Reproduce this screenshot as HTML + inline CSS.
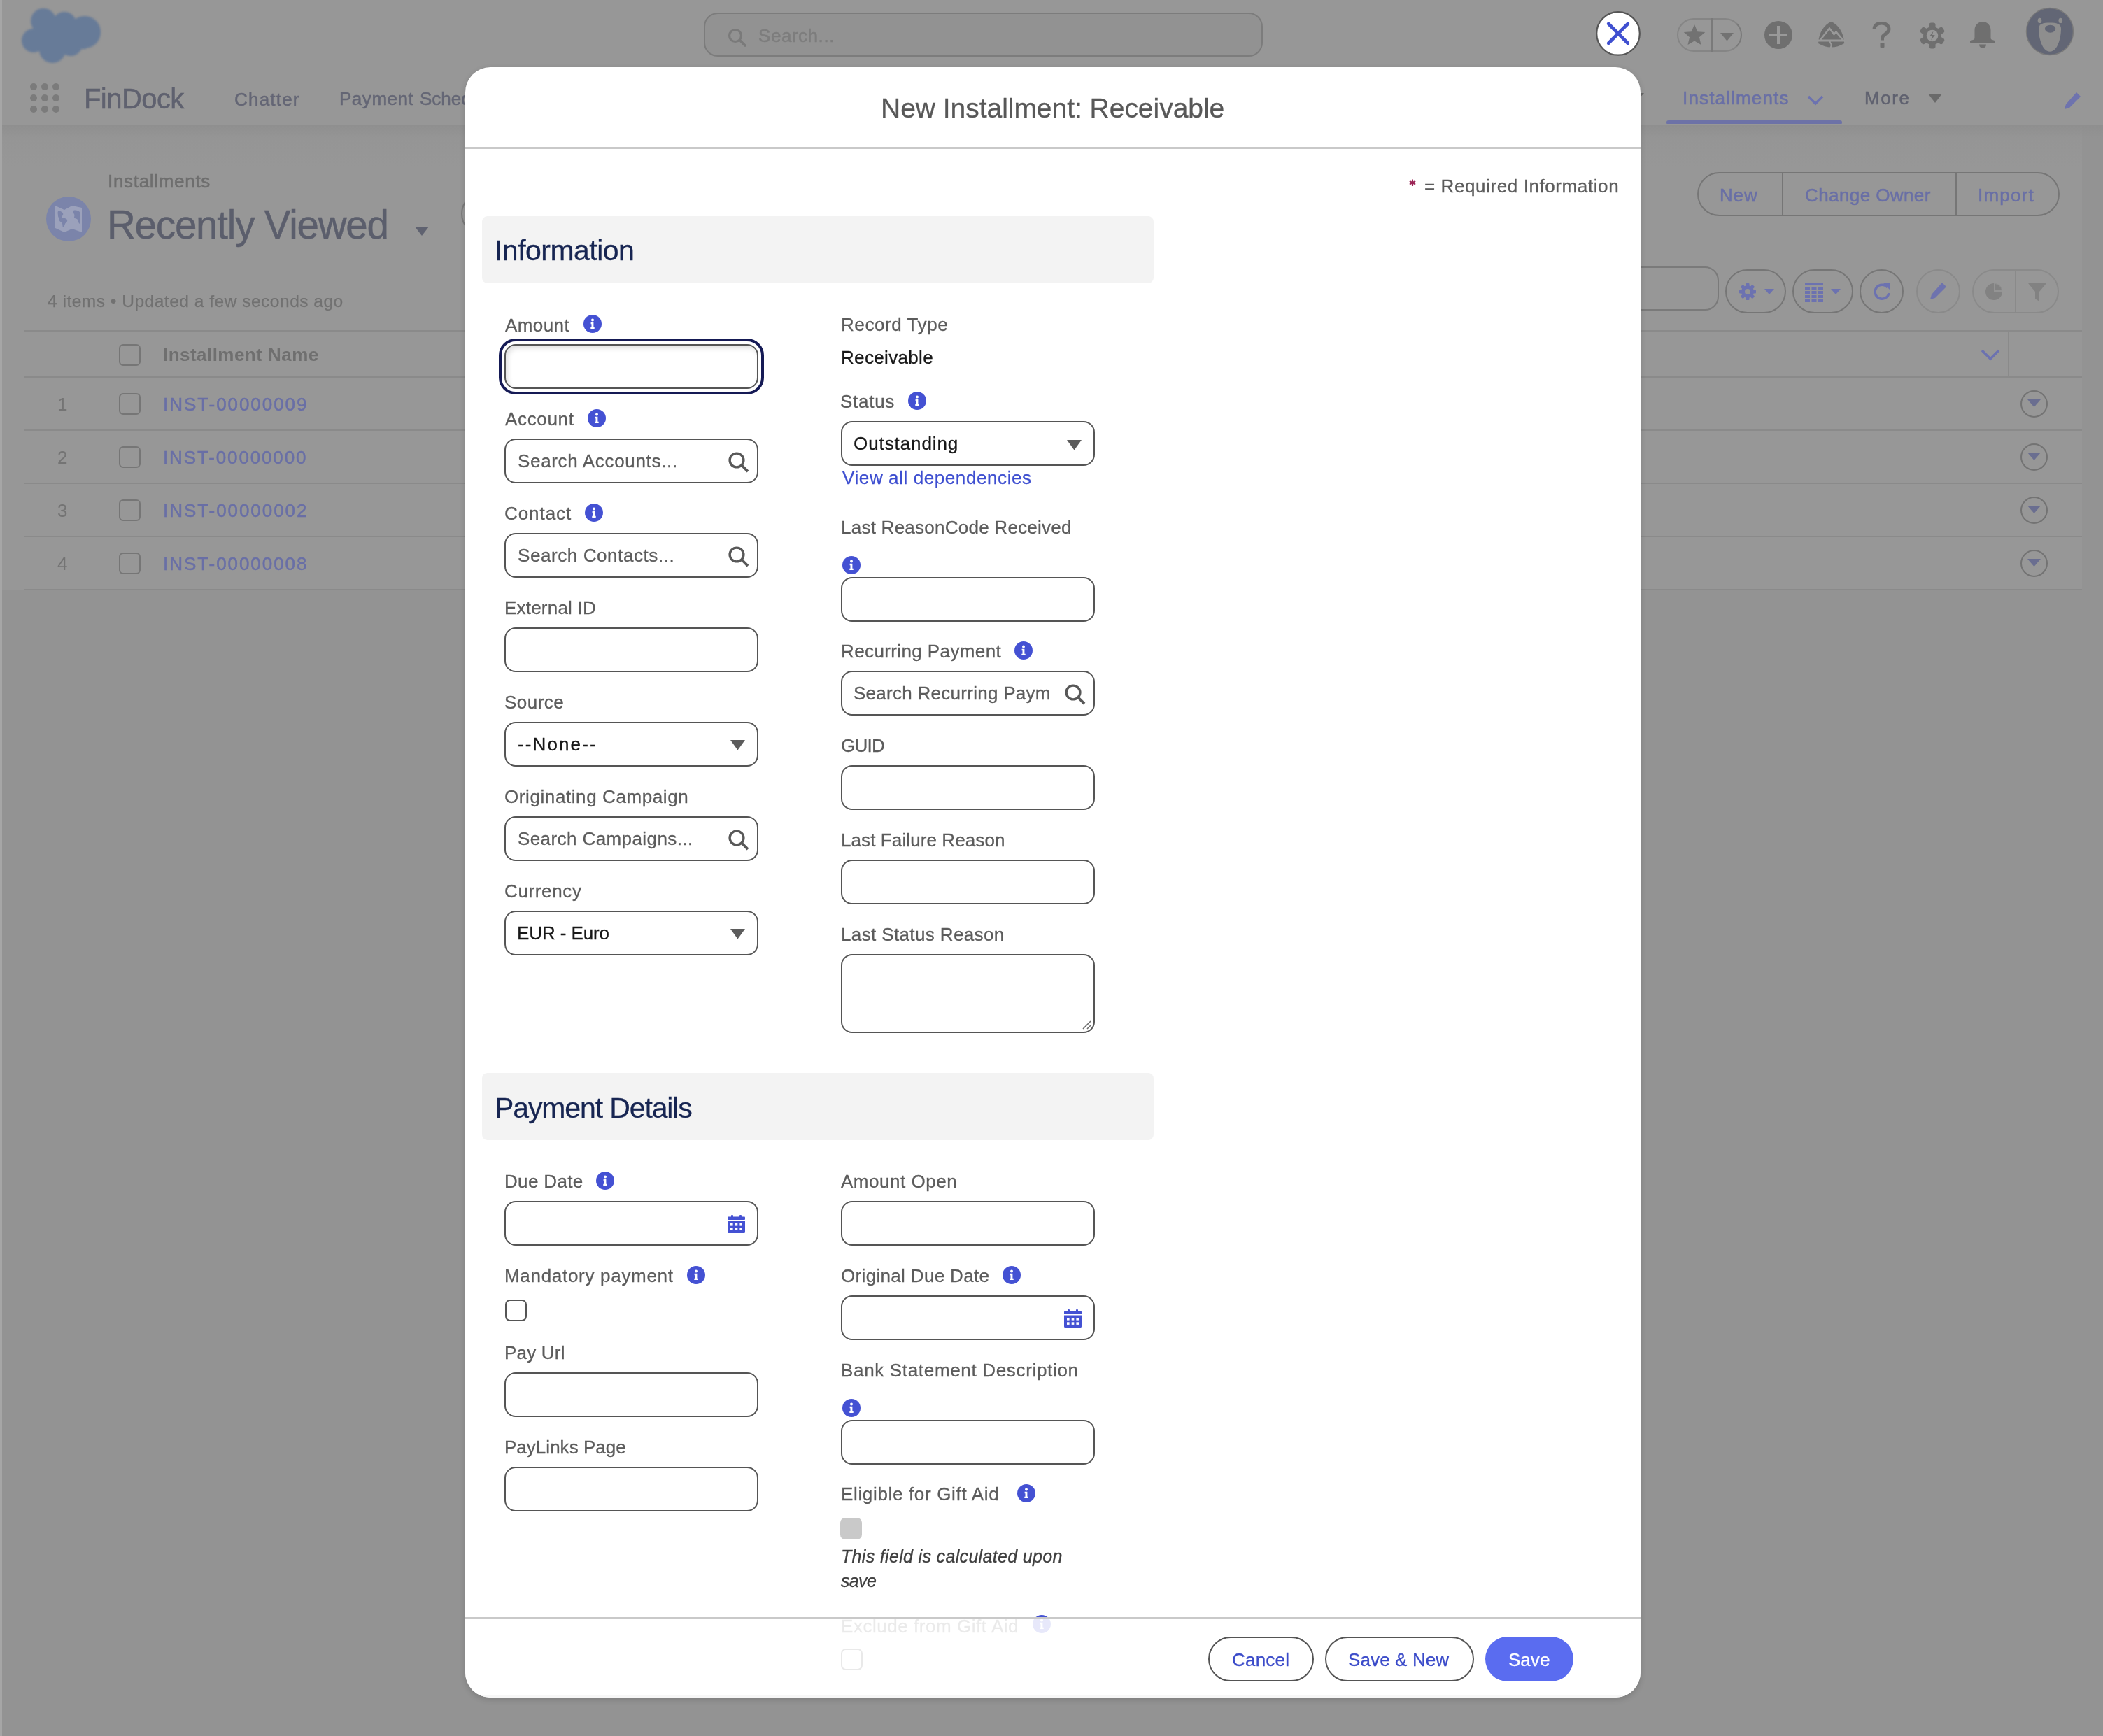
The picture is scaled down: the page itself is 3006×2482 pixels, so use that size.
<!DOCTYPE html>
<html><head><meta charset="utf-8"><style>
html,body{margin:0;padding:0;width:3006px;height:2482px;overflow:hidden;background:#939393;}
.r{position:absolute;}
.t{position:absolute;white-space:pre;font-family:"Liberation Sans",sans-serif;will-change:transform;-webkit-text-stroke:0.3px currentColor;}
#bg .t{-webkit-text-stroke:0.5px currentColor;}
#bg{position:absolute;left:0;top:0;width:3006px;height:2482px;filter:blur(0.7px);}
#md{position:absolute;left:0;top:0;width:3006px;height:2482px;clip-path:inset(96px 661px 55px 665px round 36px);}
</style></head><body>
<div id="bg"><div class="r" style="left:0px;top:0px;width:3006px;height:179px;background:#979797"></div><div class="r" style="left:3px;top:179px;width:2973px;height:665px;background:linear-gradient(#8f8f8f,#959595 18px,#979797 60px)"></div><div class="r" style="left:0px;top:0px;width:3px;height:2482px;background:#a6a6a6"></div><svg class="r" style="left:28px;top:8px;filter:blur(1.5px)" width="122" height="86" viewBox="0 0 122 86">
<g fill="#677b98"><circle cx="34" cy="22" r="18"/><circle cx="64" cy="26" r="17"/><circle cx="93" cy="38" r="23"/>
<circle cx="20" cy="50" r="17"/><circle cx="47" cy="63" r="19"/><circle cx="73" cy="55" r="17"/><rect x="20" y="24" width="75" height="38"/></g></svg><div class="r" style="left:1006px;top:18px;width:799px;height:63px;border:2px solid #7c7c7c;border-radius:20px;box-sizing:border-box;background:#929292"></div><svg class="r" style="left:1040px;top:40px" width="27" height="27" viewBox="0 0 27 27"><circle cx="11" cy="11" r="8.5" fill="none" stroke="#7a7a7a" stroke-width="3.2"/><line x1="17.5" y1="17.5" x2="25" y2="25" stroke="#7a7a7a" stroke-width="3.6" stroke-linecap="round"/></svg><div class="t" style="left:1084.1px;top:37.9px;font-size:26px;line-height:26px;color:#7d7d7d;font-weight:400;font-style:normal;letter-spacing:0.54px;">Search...</div><div class="r" style="left:2397px;top:26px;width:93px;height:48px;border:2px solid #858585;border-right-color:#7a7a7a;border-radius:24px;box-sizing:border-box"></div><div class="r" style="left:2445px;top:26px;width:3px;height:48px;background:#7a7a7a"></div><svg class="r" style="left:2406px;top:34px" width="32" height="31" viewBox="0 0 32 31"><path fill="#727272" d="M16 1l4.3 10.2 11 .9-8.4 7.2 2.6 10.8L16 24.4l-9.5 5.7 2.6-10.8L.7 12.1l11-.9z"/></svg><svg class="r" style="left:2459px;top:47px" width="19" height="12" viewBox="0 0 19 12"><path fill="#727272" d="M0 0h19L9.5 11.5z"/></svg><svg class="r" style="left:2522px;top:30px" width="40" height="40" viewBox="0 0 40 40"><circle cx="20" cy="20" r="20" fill="#6f6f6f"/><rect x="18" y="7" width="4" height="26" fill="#999"/><rect x="7" y="18" width="26" height="4" fill="#999"/></svg><svg class="r" style="left:2599px;top:31px" width="38" height="38" viewBox="0 0 38 38"><path fill="#6f6f6f" d="M18.6 0C28 4 36.5 15 37.2 31Q18.6 42 0 31C.7 15 9 4 18.6 0z"/>
<path d="M3 26L16 9.5l6.5 8.5 3-3.5L35 26" fill="none" stroke="#999" stroke-width="2.6"/><rect x="0" y="25.5" width="38" height="3" fill="#999"/><path d="M17 28c-1 3 3 4 1.5 6.5L17.5 38" fill="none" stroke="#999" stroke-width="2"/></svg><svg class="r" style="left:2676px;top:31px" width="28" height="38" viewBox="0 0 28 38"><path d="M3 11C3 5 8 2 13.5 2S24 5.5 24 10.5c0 6-7.5 7-9.5 12v4" fill="none" stroke="#6f6f6f" stroke-width="5"/><rect x="11.5" y="30.5" width="6" height="6.5" rx="1" fill="#6f6f6f"/></svg><svg class="r" style="left:2744px;top:32px" width="36" height="38" viewBox="0 0 36 38"><g fill="#6f6f6f"><circle cx="18" cy="19" r="13"/>
<rect x="13.5" y="0.5" width="9" height="37" rx="3"/><rect x="13.5" y="0.5" width="9" height="37" rx="3" transform="rotate(60 18 19)"/><rect x="13.5" y="0.5" width="9" height="37" rx="3" transform="rotate(120 18 19)"/></g>
<circle cx="18" cy="19" r="8.3" fill="#999"/><path fill="#6f6f6f" d="M19.5 12.5l-5.5 7.5h3.8l-1.5 5.5 5.5-7.5h-3.8z"/></svg><svg class="r" style="left:2815px;top:31px" width="38" height="38" viewBox="0 0 38 38"><path fill="#6f6f6f" d="M19 0c-6.5 0-11.5 5-11.5 12v11.5C7.5 25 6 26 3.5 26.5 1 27 1 28 1 29s.5 1.5 2 1.5h32c1.5 0 2-.5 2-1.5s0-2-2.5-2.5C32 26 30.5 25 30.5 23.5V12C30.5 5 25.5 0 19 0z"/><path fill="#6f6f6f" d="M14 32.5h10c0 3-2 5-5 5s-5-2-5-5z"/></svg><svg class="r" style="left:2895px;top:10px" width="70" height="70" viewBox="0 0 70 70"><circle cx="35" cy="35" r="33.5" fill="#626675" stroke="#7a7a7a" stroke-width="1.5"/>
<ellipse cx="20.5" cy="19.4" rx="2.8" ry="3.6" fill="#8e8e8e"/><ellipse cx="50.3" cy="19.4" rx="2.8" ry="3.6" fill="#8e8e8e"/>
<path fill="#8e8e8e" d="M35 22.5c-9.5 0-16 1.5-16 8.5 0 12 4.5 32.7 16 32.7S51 43 51 31c0-7-6.5-8.5-16-8.5z"/><ellipse cx="35.6" cy="31.2" rx="7.7" ry="5.5" fill="#626675"/></svg><div class="r" style="left:43px;top:119px;width:10px;height:10px;border-radius:50%;background:#7b7b7b"></div><div class="r" style="left:43px;top:135px;width:10px;height:10px;border-radius:50%;background:#7b7b7b"></div><div class="r" style="left:43px;top:151px;width:10px;height:10px;border-radius:50%;background:#7b7b7b"></div><div class="r" style="left:59px;top:119px;width:10px;height:10px;border-radius:50%;background:#7b7b7b"></div><div class="r" style="left:59px;top:135px;width:10px;height:10px;border-radius:50%;background:#7b7b7b"></div><div class="r" style="left:59px;top:151px;width:10px;height:10px;border-radius:50%;background:#7b7b7b"></div><div class="r" style="left:75px;top:119px;width:10px;height:10px;border-radius:50%;background:#7b7b7b"></div><div class="r" style="left:75px;top:135px;width:10px;height:10px;border-radius:50%;background:#7b7b7b"></div><div class="r" style="left:75px;top:151px;width:10px;height:10px;border-radius:50%;background:#7b7b7b"></div><div class="t" style="left:119.7px;top:120.5px;font-size:40px;line-height:40px;color:#5f616f;font-weight:400;font-style:normal;letter-spacing:-0.56px;">FinDock</div><div class="t" style="left:335.1px;top:128.9px;font-size:26px;line-height:26px;color:#646675;font-weight:400;font-style:normal;letter-spacing:1.21px;">Chatter</div><div class="t" style="left:485.1px;top:127.6px;font-size:26px;line-height:26px;color:#646675;font-weight:400;font-style:normal;letter-spacing:0.53px;">Payment</div><div class="t" style="left:599.5px;top:127.8px;font-size:26px;line-height:26px;color:#646675;font-weight:400;font-style:normal;letter-spacing:normal;">Schedules</div><svg class="r" style="left:2334px;top:133px" width="16" height="10" viewBox="0 0 16 10"><path fill="#666" d="M0 0h16L8 9z"/></svg><div class="t" style="left:2405.0px;top:127.4px;font-size:26px;line-height:26px;color:#696fa6;font-weight:400;font-style:normal;letter-spacing:1.16px;">Installments</div><svg class="r" style="left:2582px;top:135px" width="26" height="16" viewBox="0 0 26 16"><path d="M3 3l10 10L23 3" fill="none" stroke="#6c72b0" stroke-width="3.5"/></svg><div class="r" style="left:2382px;top:172px;width:251px;height:6px;border-radius:3px;background:#6d72a7"></div><div class="t" style="left:2664.6px;top:127.4px;font-size:26px;line-height:26px;color:#5f616f;font-weight:400;font-style:normal;letter-spacing:1.60px;">More</div><svg class="r" style="left:2756px;top:134px" width="20" height="14" viewBox="0 0 20 14"><path fill="#6a6a6a" d="M0 0h20L10 13z"/></svg><svg class="r" style="left:2948px;top:130px" width="28" height="28" viewBox="0 0 28 28"><path fill="#6e73ae" d="M20 2l6 6L10 24l-7 2 2-7z"/></svg><svg class="r" style="left:66px;top:281px" width="64" height="64" viewBox="0 0 64 64"><circle cx="32" cy="32" r="32" fill="#7b84aa"/>
<path fill="#9ba1bb" d="M13 13L26 19L37 13L51 16L51 51L37 46L26 51L13 45z"/><path fill="#7b84aa" d="M17 21c3-1 6 1 7 3 1 3-2 3-1 6 2 0 5 1 7 3 1 3-2 4-3 6-1 2-1 4-3 5-1-2 0-5-2-7-2-1-4-3-3-5 0-2-2-2-2-4 0-3-1-5 0-7zM39 20c3-1 7 0 9 2v17c-2-1-2-4-3-6-1-2-4-1-5-3 0-2 1-3 0-5-1-1-2-3-1-5z"/></svg><div class="t" style="left:153.6px;top:246.2px;font-size:26px;line-height:26px;color:#6e6e6e;font-weight:400;font-style:normal;letter-spacing:0.69px;">Installments</div><div class="t" style="left:152.7px;top:293.9px;font-size:56.5px;line-height:56.5px;color:#5b5e6c;font-weight:400;font-style:normal;letter-spacing:-1.20px;">Recently Viewed</div><svg class="r" style="left:593px;top:324px" width="20" height="14" viewBox="0 0 20 14"><path fill="#5f6270" d="M0 0h20L10 13z"/></svg><div class="r" style="left:659px;top:274px;width:63px;height:63px;border:2px solid #7a7a7a;border-radius:50%;box-sizing:border-box"></div><div class="t" style="left:67.5px;top:419.0px;font-size:24.5px;line-height:24.5px;color:#717171;font-weight:400;font-style:normal;letter-spacing:0.51px;-webkit-text-stroke:0.25px currentColor">4 items • Updated a few seconds ago</div><div class="r" style="left:2426px;top:246px;width:518px;height:63px;border:2px solid #767676;border-radius:32px;box-sizing:border-box"></div><div class="r" style="left:2547px;top:247px;width:2px;height:61px;background:#767676"></div><div class="r" style="left:2795px;top:247px;width:2px;height:61px;background:#767676"></div><div class="t" style="left:2458.4px;top:265.7px;font-size:26px;line-height:26px;color:#696fa6;font-weight:400;font-style:normal;letter-spacing:0.82px;">New</div><div class="t" style="left:2580.1px;top:265.7px;font-size:26px;line-height:26px;color:#696fa6;font-weight:400;font-style:normal;letter-spacing:0.41px;">Change Owner</div><div class="t" style="left:2827.2px;top:265.7px;font-size:26px;line-height:26px;color:#696fa6;font-weight:400;font-style:normal;letter-spacing:1.19px;">Import</div><div class="r" style="left:1900px;top:381px;width:557px;height:63px;border:2px solid #7a7a7a;border-radius:20px;box-sizing:border-box"></div><div class="r" style="left:2466px;top:385px;width:87px;height:63px;border:2px solid #767676;border-radius:32px;box-sizing:border-box"></div><svg class="r" style="left:2484px;top:403px" width="28" height="28" viewBox="0 0 28 28"><g fill="#6c72b0"><circle cx="14" cy="14" r="9"/><rect x="11.5" y="2" width="5" height="24" rx="1"/><rect x="11.5" y="2" width="5" height="24" rx="1" transform="rotate(45 14 14)"/><rect x="11.5" y="2" width="5" height="24" rx="1" transform="rotate(90 14 14)"/><rect x="11.5" y="2" width="5" height="24" rx="1" transform="rotate(135 14 14)"/></g><circle cx="14" cy="14" r="4" fill="#949494"/></svg><svg class="r" style="left:2522px;top:413px" width="14" height="9" viewBox="0 0 14 9"><path fill="#6c72b0" d="M0 0h14L7 8z"/></svg><div class="r" style="left:2562px;top:385px;width:87px;height:63px;border:2px solid #767676;border-radius:32px;box-sizing:border-box"></div><svg class="r" style="left:2580px;top:404px" width="26" height="28" viewBox="0 0 26 28"><g fill="#6c72b0"><rect x="0" y="0" width="26" height="4"/><rect x="0" y="6" width="7" height="4"/><rect x="9.5" y="6" width="7" height="4"/><rect x="19" y="6" width="7" height="4"/><rect x="0" y="12" width="7" height="4"/><rect x="9.5" y="12" width="7" height="4"/><rect x="19" y="12" width="7" height="4"/><rect x="0" y="18" width="7" height="4"/><rect x="9.5" y="18" width="7" height="4"/><rect x="19" y="18" width="7" height="4"/><rect x="0" y="24" width="7" height="4"/><rect x="9.5" y="24" width="7" height="4"/><rect x="19" y="24" width="7" height="4"/></g></svg><svg class="r" style="left:2617px;top:413px" width="14" height="9" viewBox="0 0 14 9"><path fill="#6c72b0" d="M0 0h14L7 8z"/></svg><div class="r" style="left:2658px;top:385px;width:63px;height:63px;border:2px solid #767676;border-radius:50%;box-sizing:border-box"></div><svg class="r" style="left:2675px;top:402px" width="30" height="30" viewBox="0 0 30 30"><path d="M23 9A10 10 0 1 0 25 17" fill="none" stroke="#6c72b0" stroke-width="3.5"/><path fill="#6c72b0" d="M17 3h10v10z"/></svg><div class="r" style="left:2739px;top:385px;width:63px;height:63px;border:2px solid #8a8a8a;border-radius:50%;box-sizing:border-box"></div><svg class="r" style="left:2756px;top:402px" width="28" height="28" viewBox="0 0 28 28"><path fill="#6e73ae" d="M20 2l6 6L10 24l-7 2 2-7z"/></svg><div class="r" style="left:2819px;top:385px;width:124px;height:63px;border:2px solid #8a8a8a;border-radius:32px;box-sizing:border-box"></div><div class="r" style="left:2880px;top:386px;width:2px;height:61px;background:#8a8a8a"></div><svg class="r" style="left:2836px;top:403px" width="28" height="28" viewBox="0 0 28 28"><circle cx="14" cy="14" r="12" fill="#828282"/><path d="M14 14V2A12 12 0 0 1 26 14z" fill="#949494"/><path d="M16 12V3a10 10 0 0 1 9 9z" fill="#828282"/></svg><svg class="r" style="left:2898px;top:404px" width="28" height="28" viewBox="0 0 28 28"><path fill="#828282" d="M1 1h26L17 13v14l-6-4V13z"/></svg><div class="r" style="left:34px;top:472px;width:2942px;height:2px;background:#8a8a8a"></div><div class="r" style="left:34px;top:538px;width:2942px;height:2px;background:#8a8a8a"></div><div class="r" style="left:34px;top:614px;width:2942px;height:2px;background:#8a8a8a"></div><div class="r" style="left:34px;top:690px;width:2942px;height:2px;background:#8a8a8a"></div><div class="r" style="left:34px;top:766px;width:2942px;height:2px;background:#8a8a8a"></div><div class="r" style="left:34px;top:842px;width:2942px;height:2px;background:#8a8a8a"></div><div class="r" style="left:2870px;top:473px;width:2px;height:66px;background:#8a8a8a"></div><svg class="r" style="left:2830px;top:498px" width="30" height="20" viewBox="0 0 30 20"><path d="M3 3l12 12L27 3" fill="none" stroke="#6c72b0" stroke-width="3.5"/></svg><div class="r" style="left:170px;top:492px;width:31px;height:31px;border:2px solid #767676;border-radius:6px;box-sizing:border-box"></div><div class="t" style="left:233.0px;top:493.5px;font-size:26px;line-height:26px;color:#6f6f6f;font-weight:700;font-style:normal;letter-spacing:0.46px;-webkit-text-stroke:0px">Installment Name</div><div class="t" style="left:82.0px;top:565.3px;font-size:26px;line-height:26px;color:#747474;font-weight:400;font-style:normal;letter-spacing:normal;-webkit-text-stroke:0px">1</div><div class="r" style="left:170px;top:562px;width:31px;height:31px;border:2px solid #767676;border-radius:6px;box-sizing:border-box"></div><div class="t" style="left:232.5px;top:565.4px;font-size:26px;line-height:26px;color:#696fa6;font-weight:400;font-style:normal;letter-spacing:1.94px;">INST-00000009</div><div class="r" style="left:2888px;top:558px;width:39px;height:39px;border:2px solid #737373;border-radius:50%;box-sizing:border-box"></div><svg class="r" style="left:2898px;top:571px" width="19" height="12" viewBox="0 0 19 12"><path fill="#6a6e90" d="M0 0h19L9.5 11z"/></svg><div class="t" style="left:82.0px;top:641.3px;font-size:26px;line-height:26px;color:#747474;font-weight:400;font-style:normal;letter-spacing:normal;-webkit-text-stroke:0px">2</div><div class="r" style="left:170px;top:638px;width:31px;height:31px;border:2px solid #767676;border-radius:6px;box-sizing:border-box"></div><div class="t" style="left:232.5px;top:641.4px;font-size:26px;line-height:26px;color:#696fa6;font-weight:400;font-style:normal;letter-spacing:1.86px;">INST-00000000</div><div class="r" style="left:2888px;top:634px;width:39px;height:39px;border:2px solid #737373;border-radius:50%;box-sizing:border-box"></div><svg class="r" style="left:2898px;top:647px" width="19" height="12" viewBox="0 0 19 12"><path fill="#6a6e90" d="M0 0h19L9.5 11z"/></svg><div class="t" style="left:82.0px;top:717.3px;font-size:26px;line-height:26px;color:#747474;font-weight:400;font-style:normal;letter-spacing:normal;-webkit-text-stroke:0px">3</div><div class="r" style="left:170px;top:714px;width:31px;height:31px;border:2px solid #767676;border-radius:6px;box-sizing:border-box"></div><div class="t" style="left:232.5px;top:717.4px;font-size:26px;line-height:26px;color:#696fa6;font-weight:400;font-style:normal;letter-spacing:1.94px;">INST-00000002</div><div class="r" style="left:2888px;top:710px;width:39px;height:39px;border:2px solid #737373;border-radius:50%;box-sizing:border-box"></div><svg class="r" style="left:2898px;top:723px" width="19" height="12" viewBox="0 0 19 12"><path fill="#6a6e90" d="M0 0h19L9.5 11z"/></svg><div class="t" style="left:82.0px;top:793.3px;font-size:26px;line-height:26px;color:#747474;font-weight:400;font-style:normal;letter-spacing:normal;-webkit-text-stroke:0px">4</div><div class="r" style="left:170px;top:790px;width:31px;height:31px;border:2px solid #767676;border-radius:6px;box-sizing:border-box"></div><div class="t" style="left:232.5px;top:793.4px;font-size:26px;line-height:26px;color:#696fa6;font-weight:400;font-style:normal;letter-spacing:1.94px;">INST-00000008</div><div class="r" style="left:2888px;top:786px;width:39px;height:39px;border:2px solid #737373;border-radius:50%;box-sizing:border-box"></div><svg class="r" style="left:2898px;top:799px" width="19" height="12" viewBox="0 0 19 12"><path fill="#6a6e90" d="M0 0h19L9.5 11z"/></svg><div class="r" style="left:2976px;top:179px;width:30px;height:18px;background:linear-gradient(#8f8f8f,#939393)"></div></div>
<div class="r" style="left:665px;top:96px;width:1680px;height:2331px;border-radius:36px;box-shadow:0 3px 8px rgba(0,0,0,0.16)"></div><div id="md"><div class="r" style="left:665px;top:96px;width:1680px;height:2331px;background:#fff"></div><div class="t" style="left:1259.2px;top:135.4px;font-size:39px;line-height:39px;color:#585858;font-weight:400;font-style:normal;letter-spacing:-0.03px;">New Installment: Receivable</div><div class="r" style="left:665px;top:210px;width:1680px;height:3px;background:#c9c9c9"></div><svg class="r" style="left:2009px;top:251px" width="20" height="20" viewBox="0 0 20 20"><g stroke="#9b2355" stroke-width="2.1"><path d="M10 5.5v9.5"/><path d="M5.9 7.9l8.2 4.7M14.1 7.9l-8.2 4.7"/></g></svg><div class="t" style="left:2035.9px;top:253.2px;font-size:26px;line-height:26px;color:#5c5c5c;font-weight:400;font-style:normal;letter-spacing:0.59px;">= Required Information</div><div class="r" style="left:689px;top:309px;width:960px;height:96px;background:#f3f3f3;border-radius:8px"></div><div class="t" style="left:707.1px;top:338.0px;font-size:41px;line-height:41px;color:#172552;font-weight:400;font-style:normal;letter-spacing:-0.52px;">Information</div><div class="r" style="left:689px;top:1534px;width:960px;height:96px;background:#f3f3f3;border-radius:8px"></div><div class="t" style="left:706.5px;top:1563.6px;font-size:41px;line-height:41px;color:#172552;font-weight:400;font-style:normal;letter-spacing:-1.12px;">Payment Details</div><div class="t" style="left:722.4px;top:452.0px;font-size:26px;line-height:26px;color:#5c5c5c;font-weight:400;font-style:normal;letter-spacing:0.41px;">Amount</div><svg class="r" style="left:834.0px;top:450.0px" width="26" height="26" viewBox="0 0 26 26"><circle cx="13" cy="13" r="13" fill="#4451d3"/><circle cx="13" cy="7.6" r="2" fill="#fff"/><path fill="#fff" d="M10.6 10.8h3.8v6.9h1.3v2.4h-5.4v-2.4h1.2v-4.5h-0.9z"/></svg><div class="r" style="left:713px;top:484px;width:379px;height:80px;border:4px solid #151a55;border-radius:24px;box-sizing:border-box"></div><div class="r" style="left:721px;top:492px;width:363px;height:64px;border:2px solid #555555;border-radius:16px;box-sizing:border-box;background:#fff;box-shadow:inset 3px 4px 7px rgba(0,0,0,0.12)"></div><div class="t" style="left:721.9px;top:586.4px;font-size:26px;line-height:26px;color:#5c5c5c;font-weight:400;font-style:normal;letter-spacing:0.66px;">Account</div><svg class="r" style="left:840.0px;top:585.0px" width="26" height="26" viewBox="0 0 26 26"><circle cx="13" cy="13" r="13" fill="#4451d3"/><circle cx="13" cy="7.6" r="2" fill="#fff"/><path fill="#fff" d="M10.6 10.8h3.8v6.9h1.3v2.4h-5.4v-2.4h1.2v-4.5h-0.9z"/></svg><div class="r" style="left:721px;top:627px;width:363px;height:64px;border:2px solid #555555;border-radius:16px;box-sizing:border-box;background:#fff;"></div><div class="t" style="left:739.5px;top:646.4px;font-size:26px;line-height:26px;color:#5c5c5c;font-weight:400;font-style:normal;letter-spacing:0.67px;">Search Accounts...</div><svg class="r" style="left:1041px;top:646px" width="30" height="30" viewBox="0 0 30 30"><circle cx="12" cy="12" r="9.9" fill="none" stroke="#585858" stroke-width="3.4"/><line x1="19" y1="19" x2="28" y2="28.2" stroke="#585858" stroke-width="3.8"/></svg><div class="t" style="left:720.6px;top:721.4px;font-size:26px;line-height:26px;color:#5c5c5c;font-weight:400;font-style:normal;letter-spacing:0.93px;">Contact</div><svg class="r" style="left:836.0px;top:720.0px" width="26" height="26" viewBox="0 0 26 26"><circle cx="13" cy="13" r="13" fill="#4451d3"/><circle cx="13" cy="7.6" r="2" fill="#fff"/><path fill="#fff" d="M10.6 10.8h3.8v6.9h1.3v2.4h-5.4v-2.4h1.2v-4.5h-0.9z"/></svg><div class="r" style="left:721px;top:762px;width:363px;height:64px;border:2px solid #555555;border-radius:16px;box-sizing:border-box;background:#fff;"></div><div class="t" style="left:739.5px;top:781.4px;font-size:26px;line-height:26px;color:#5c5c5c;font-weight:400;font-style:normal;letter-spacing:0.58px;">Search Contacts...</div><svg class="r" style="left:1041px;top:781px" width="30" height="30" viewBox="0 0 30 30"><circle cx="12" cy="12" r="9.9" fill="none" stroke="#585858" stroke-width="3.4"/><line x1="19" y1="19" x2="28" y2="28.2" stroke="#585858" stroke-width="3.8"/></svg><div class="t" style="left:721.3px;top:856.4px;font-size:26px;line-height:26px;color:#5c5c5c;font-weight:400;font-style:normal;letter-spacing:0.21px;">External ID</div><div class="r" style="left:721px;top:897px;width:363px;height:64px;border:2px solid #555555;border-radius:16px;box-sizing:border-box;background:#fff;"></div><div class="t" style="left:720.6px;top:991.4px;font-size:26px;line-height:26px;color:#5c5c5c;font-weight:400;font-style:normal;letter-spacing:0.47px;">Source</div><div class="r" style="left:721px;top:1032px;width:363px;height:64px;border:2px solid #555555;border-radius:16px;box-sizing:border-box;background:#fff;"></div><div class="t" style="left:739.5px;top:1050.9px;font-size:26px;line-height:26px;color:#181818;font-weight:400;font-style:normal;letter-spacing:2.11px;">--None--</div><svg class="r" style="left:1044px;top:1058px" width="21" height="15" viewBox="0 0 21 15"><path fill="#5c5c5c" d="M0 0h21L10.5 14.5z"/></svg><div class="t" style="left:721.1px;top:1126.4px;font-size:26px;line-height:26px;color:#5c5c5c;font-weight:400;font-style:normal;letter-spacing:0.59px;">Originating Campaign</div><div class="r" style="left:721px;top:1167px;width:363px;height:64px;border:2px solid #555555;border-radius:16px;box-sizing:border-box;background:#fff;"></div><div class="t" style="left:739.5px;top:1186.4px;font-size:26px;line-height:26px;color:#5c5c5c;font-weight:400;font-style:normal;letter-spacing:0.41px;">Search Campaigns...</div><svg class="r" style="left:1041px;top:1186px" width="30" height="30" viewBox="0 0 30 30"><circle cx="12" cy="12" r="9.9" fill="none" stroke="#585858" stroke-width="3.4"/><line x1="19" y1="19" x2="28" y2="28.2" stroke="#585858" stroke-width="3.8"/></svg><div class="t" style="left:720.8px;top:1261.4px;font-size:26px;line-height:26px;color:#5c5c5c;font-weight:400;font-style:normal;letter-spacing:0.63px;">Currency</div><div class="r" style="left:721px;top:1302px;width:363px;height:64px;border:2px solid #555555;border-radius:16px;box-sizing:border-box;background:#fff;"></div><div class="t" style="left:739.1px;top:1321.4px;font-size:26px;line-height:26px;color:#181818;font-weight:400;font-style:normal;letter-spacing:-0.10px;">EUR - Euro</div><svg class="r" style="left:1044px;top:1328px" width="21" height="15" viewBox="0 0 21 15"><path fill="#5c5c5c" d="M0 0h21L10.5 14.5z"/></svg><div class="t" style="left:1201.6px;top:451.4px;font-size:26px;line-height:26px;color:#5c5c5c;font-weight:400;font-style:normal;letter-spacing:0.57px;">Record Type</div><div class="t" style="left:1201.6px;top:498.4px;font-size:26px;line-height:26px;color:#181818;font-weight:400;font-style:normal;letter-spacing:0.34px;">Receivable</div><div class="t" style="left:1201.1px;top:561.4px;font-size:26px;line-height:26px;color:#5c5c5c;font-weight:400;font-style:normal;letter-spacing:0.72px;">Status</div><svg class="r" style="left:1298.0px;top:560.0px" width="26" height="26" viewBox="0 0 26 26"><circle cx="13" cy="13" r="13" fill="#4451d3"/><circle cx="13" cy="7.6" r="2" fill="#fff"/><path fill="#fff" d="M10.6 10.8h3.8v6.9h1.3v2.4h-5.4v-2.4h1.2v-4.5h-0.9z"/></svg><div class="r" style="left:1202px;top:602px;width:363px;height:64px;border:2px solid #555555;border-radius:16px;box-sizing:border-box;background:#fff;"></div><div class="t" style="left:1220.1px;top:621.4px;font-size:26px;line-height:26px;color:#181818;font-weight:400;font-style:normal;letter-spacing:0.91px;">Outstanding</div><svg class="r" style="left:1525px;top:629px" width="21" height="15" viewBox="0 0 21 15"><path fill="#5c5c5c" d="M0 0h21L10.5 14.5z"/></svg><div class="t" style="left:1203.9px;top:670.2px;font-size:26px;line-height:26px;color:#3d4ed0;font-weight:400;font-style:normal;letter-spacing:0.59px;">View all dependencies</div><div class="t" style="left:1201.6px;top:741.4px;font-size:26px;line-height:26px;color:#5c5c5c;font-weight:400;font-style:normal;letter-spacing:0.25px;">Last ReasonCode Received</div><svg class="r" style="left:1204.0px;top:795.0px" width="26" height="26" viewBox="0 0 26 26"><circle cx="13" cy="13" r="13" fill="#4451d3"/><circle cx="13" cy="7.6" r="2" fill="#fff"/><path fill="#fff" d="M10.6 10.8h3.8v6.9h1.3v2.4h-5.4v-2.4h1.2v-4.5h-0.9z"/></svg><div class="r" style="left:1202px;top:825px;width:363px;height:64px;border:2px solid #555555;border-radius:16px;box-sizing:border-box;background:#fff;"></div><div class="t" style="left:1201.6px;top:918.4px;font-size:26px;line-height:26px;color:#5c5c5c;font-weight:400;font-style:normal;letter-spacing:0.39px;">Recurring Payment</div><svg class="r" style="left:1450.0px;top:917.0px" width="26" height="26" viewBox="0 0 26 26"><circle cx="13" cy="13" r="13" fill="#4451d3"/><circle cx="13" cy="7.6" r="2" fill="#fff"/><path fill="#fff" d="M10.6 10.8h3.8v6.9h1.3v2.4h-5.4v-2.4h1.2v-4.5h-0.9z"/></svg><div class="r" style="left:1202px;top:959px;width:363px;height:64px;border:2px solid #555555;border-radius:16px;box-sizing:border-box;background:#fff;"></div><div class="t" style="left:1219.5px;top:978.4px;font-size:26px;line-height:26px;color:#5c5c5c;font-weight:400;font-style:normal;letter-spacing:0.27px;">Search Recurring Paym</div><svg class="r" style="left:1522px;top:978px" width="30" height="30" viewBox="0 0 30 30"><circle cx="12" cy="12" r="9.9" fill="none" stroke="#585858" stroke-width="3.4"/><line x1="19" y1="19" x2="28" y2="28.2" stroke="#585858" stroke-width="3.8"/></svg><div class="t" style="left:1202.0px;top:1053.4px;font-size:26px;line-height:26px;color:#5c5c5c;font-weight:400;font-style:normal;letter-spacing:-0.71px;">GUID</div><div class="r" style="left:1202px;top:1094px;width:363px;height:64px;border:2px solid #555555;border-radius:16px;box-sizing:border-box;background:#fff;"></div><div class="t" style="left:1201.6px;top:1188.4px;font-size:26px;line-height:26px;color:#5c5c5c;font-weight:400;font-style:normal;letter-spacing:0.10px;">Last Failure Reason</div><div class="r" style="left:1202px;top:1229px;width:363px;height:64px;border:2px solid #555555;border-radius:16px;box-sizing:border-box;background:#fff;"></div><div class="t" style="left:1201.6px;top:1323.4px;font-size:26px;line-height:26px;color:#5c5c5c;font-weight:400;font-style:normal;letter-spacing:0.37px;">Last Status Reason</div><div class="r" style="left:1202px;top:1364px;width:363px;height:113px;border:2px solid #555555;border-radius:16px;box-sizing:border-box;background:#fff;"></div><svg class="r" style="left:1546px;top:1458px" width="14" height="14" viewBox="0 0 14 14"><path d="M2 13L13 2M8 13l5-5" stroke="#6b6b6b" stroke-width="1.6"/></svg><div class="t" style="left:721.0px;top:1676.4px;font-size:26px;line-height:26px;color:#5c5c5c;font-weight:400;font-style:normal;letter-spacing:0.34px;">Due Date</div><svg class="r" style="left:852.0px;top:1675.0px" width="26" height="26" viewBox="0 0 26 26"><circle cx="13" cy="13" r="13" fill="#4451d3"/><circle cx="13" cy="7.6" r="2" fill="#fff"/><path fill="#fff" d="M10.6 10.8h3.8v6.9h1.3v2.4h-5.4v-2.4h1.2v-4.5h-0.9z"/></svg><div class="r" style="left:721px;top:1717px;width:363px;height:64px;border:2px solid #555555;border-radius:16px;box-sizing:border-box;background:#fff;"></div><svg class="r" style="left:1040px;top:1737px" width="25" height="26" viewBox="0 0 25 26"><g fill="#4451d3"><rect x="5" y="0" width="3" height="4" rx="1"/><rect x="17" y="0" width="3" height="4" rx="1"/><rect x="0" y="2.5" width="25" height="4.5" rx="1"/><path d="M0 8.5h25v16a1.5 1.5 0 0 1-1.5 1.5h-22A1.5 1.5 0 0 1 0 24.5z"/></g>
<g fill="#fff"><rect x="4" y="12" width="3.6" height="3.6"/><rect x="10.7" y="12" width="3.6" height="3.6"/><rect x="17.4" y="12" width="3.6" height="3.6"/><rect x="4" y="18.3" width="3.6" height="3.6"/><rect x="10.7" y="18.3" width="3.6" height="3.6"/><rect x="17.4" y="18.3" width="3.6" height="3.6"/></g></svg><div class="t" style="left:1202.4px;top:1676.4px;font-size:26px;line-height:26px;color:#5c5c5c;font-weight:400;font-style:normal;letter-spacing:0.53px;">Amount Open</div><div class="r" style="left:1202px;top:1717px;width:363px;height:64px;border:2px solid #555555;border-radius:16px;box-sizing:border-box;background:#fff;"></div><div class="t" style="left:721.3px;top:1811.4px;font-size:26px;line-height:26px;color:#5c5c5c;font-weight:400;font-style:normal;letter-spacing:0.70px;">Mandatory payment</div><svg class="r" style="left:982.0px;top:1810.0px" width="26" height="26" viewBox="0 0 26 26"><circle cx="13" cy="13" r="13" fill="#4451d3"/><circle cx="13" cy="7.6" r="2" fill="#fff"/><path fill="#fff" d="M10.6 10.8h3.8v6.9h1.3v2.4h-5.4v-2.4h1.2v-4.5h-0.9z"/></svg><div class="r" style="left:722px;top:1858px;width:31px;height:31px;border:2px solid #555555;border-radius:7px;box-sizing:border-box;background:#fff"></div><div class="t" style="left:1202.0px;top:1811.4px;font-size:26px;line-height:26px;color:#5c5c5c;font-weight:400;font-style:normal;letter-spacing:0.33px;">Original Due Date</div><svg class="r" style="left:1433.0px;top:1810.0px" width="26" height="26" viewBox="0 0 26 26"><circle cx="13" cy="13" r="13" fill="#4451d3"/><circle cx="13" cy="7.6" r="2" fill="#fff"/><path fill="#fff" d="M10.6 10.8h3.8v6.9h1.3v2.4h-5.4v-2.4h1.2v-4.5h-0.9z"/></svg><div class="r" style="left:1202px;top:1852px;width:363px;height:64px;border:2px solid #555555;border-radius:16px;box-sizing:border-box;background:#fff;"></div><svg class="r" style="left:1521px;top:1872px" width="25" height="26" viewBox="0 0 25 26"><g fill="#4451d3"><rect x="5" y="0" width="3" height="4" rx="1"/><rect x="17" y="0" width="3" height="4" rx="1"/><rect x="0" y="2.5" width="25" height="4.5" rx="1"/><path d="M0 8.5h25v16a1.5 1.5 0 0 1-1.5 1.5h-22A1.5 1.5 0 0 1 0 24.5z"/></g>
<g fill="#fff"><rect x="4" y="12" width="3.6" height="3.6"/><rect x="10.7" y="12" width="3.6" height="3.6"/><rect x="17.4" y="12" width="3.6" height="3.6"/><rect x="4" y="18.3" width="3.6" height="3.6"/><rect x="10.7" y="18.3" width="3.6" height="3.6"/><rect x="17.4" y="18.3" width="3.6" height="3.6"/></g></svg><div class="t" style="left:721.0px;top:1921.4px;font-size:26px;line-height:26px;color:#5c5c5c;font-weight:400;font-style:normal;letter-spacing:0.21px;">Pay Url</div><div class="r" style="left:721px;top:1962px;width:363px;height:64px;border:2px solid #555555;border-radius:16px;box-sizing:border-box;background:#fff;"></div><div class="t" style="left:1201.6px;top:1946.4px;font-size:26px;line-height:26px;color:#5c5c5c;font-weight:400;font-style:normal;letter-spacing:0.67px;">Bank Statement Description</div><svg class="r" style="left:1204.0px;top:1999.6px" width="26" height="26" viewBox="0 0 26 26"><circle cx="13" cy="13" r="13" fill="#4451d3"/><circle cx="13" cy="7.6" r="2" fill="#fff"/><path fill="#fff" d="M10.6 10.8h3.8v6.9h1.3v2.4h-5.4v-2.4h1.2v-4.5h-0.9z"/></svg><div class="r" style="left:1202px;top:2030px;width:363px;height:64px;border:2px solid #555555;border-radius:16px;box-sizing:border-box;background:#fff;"></div><div class="t" style="left:721.0px;top:2056.4px;font-size:26px;line-height:26px;color:#5c5c5c;font-weight:400;font-style:normal;letter-spacing:0.02px;">PayLinks Page</div><div class="r" style="left:721px;top:2097px;width:363px;height:64px;border:2px solid #555555;border-radius:16px;box-sizing:border-box;background:#fff;"></div><div class="t" style="left:1201.6px;top:2123.4px;font-size:26px;line-height:26px;color:#5c5c5c;font-weight:400;font-style:normal;letter-spacing:0.66px;">Eligible for Gift Aid</div><svg class="r" style="left:1454.0px;top:2122.0px" width="26" height="26" viewBox="0 0 26 26"><circle cx="13" cy="13" r="13" fill="#4451d3"/><circle cx="13" cy="7.6" r="2" fill="#fff"/><path fill="#fff" d="M10.6 10.8h3.8v6.9h1.3v2.4h-5.4v-2.4h1.2v-4.5h-0.9z"/></svg><div class="r" style="left:1201px;top:2170px;width:31px;height:31px;border:2px solid #c9c9c9;border-radius:7px;box-sizing:border-box;background:#c9c9c9"></div><div class="t" style="left:1201.6px;top:2212.8px;font-size:25px;line-height:25px;color:#3e3e3e;font-weight:400;font-style:italic;letter-spacing:0.33px;">This field is calculated upon</div><div class="t" style="left:1202.0px;top:2248.3px;font-size:25px;line-height:25px;color:#3e3e3e;font-weight:400;font-style:italic;letter-spacing:-0.64px;">save</div><div class="t" style="left:1202.2px;top:2311.6px;font-size:26px;line-height:26px;color:#5c5c5c;font-weight:400;font-style:normal;letter-spacing:0.54px;">Exclude from Gift Aid</div><svg class="r" style="left:1476.0px;top:2309.0px" width="26" height="26" viewBox="0 0 26 26"><circle cx="13" cy="13" r="13" fill="#4451d3"/><circle cx="13" cy="7.6" r="2" fill="#fff"/><path fill="#fff" d="M10.6 10.8h3.8v6.9h1.3v2.4h-5.4v-2.4h1.2v-4.5h-0.9z"/></svg><div class="r" style="left:1202px;top:2357px;width:31px;height:31px;border:2px solid #555555;border-radius:7px;box-sizing:border-box;background:#fff"></div><div class="r" style="left:665px;top:2312px;width:1680px;height:115px;background:rgba(255,255,255,0.87)"></div><div class="r" style="left:665px;top:2424px;width:1680px;height:4px;background:#f7f7f7"></div><div class="r" style="left:665px;top:2312px;width:1680px;height:3px;background:#c9c9c9"></div><div class="r" style="left:1727px;top:2340px;width:151px;height:64px;border:2px solid #545454;border-radius:32px;box-sizing:border-box;background:#fff"></div><div class="t" style="left:1761.3px;top:2360.3px;font-size:26px;line-height:26px;color:#3b4bc9;font-weight:400;font-style:normal;letter-spacing:0.21px;">Cancel</div><div class="r" style="left:1894px;top:2340px;width:213px;height:64px;border:2px solid #545454;border-radius:32px;box-sizing:border-box;background:#fff"></div><div class="t" style="left:1927.3px;top:2359.8px;font-size:26px;line-height:26px;color:#3b4bc9;font-weight:400;font-style:normal;letter-spacing:0.12px;">Save &amp; New</div><div class="r" style="left:2123px;top:2340px;width:126px;height:64px;border-radius:32px;background:#5a6cf0"></div><div class="t" style="left:2156.3px;top:2360.1px;font-size:26px;line-height:26px;color:#ffffff;font-weight:400;font-style:normal;letter-spacing:0.03px;">Save</div></div>
<svg class="r" style="left:2280px;top:14px" width="66" height="68" viewBox="0 0 66 68"><circle cx="33" cy="33.9" r="30.8" fill="#fff" stroke="#555" stroke-width="2.2"/><path d="M19.2 20L46.8 47.8M46.8 20L19.2 47.8" stroke="#3f4fd0" stroke-width="4.8" stroke-linecap="round"/></svg>
</body></html>
